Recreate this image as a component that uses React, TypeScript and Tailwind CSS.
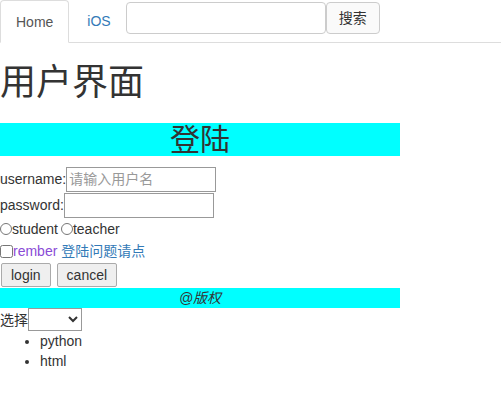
import React, { useState } from 'react';

const App = () => {
  const [keyword, setKeyword] = useState('');
  const [role, setRole] = useState('');

  return (
    <div className="min-h-screen bg-white text-[14px] leading-[20px] text-[#333] font-['Liberation_Sans','Noto_Sans_CJK_SC',sans-serif]">
      {/* Nav tabs + search */}
      <div className="flex items-start border-b border-[#ddd] h-[43px]">
        <a className="block h-[43px] px-[15px] pt-[11px] border border-[#ddd] border-b-white rounded-t-[4px] bg-white text-[#555]">
          Home
        </a>
        <a className="block h-[42px] pl-[18px] pr-[15px] pt-[11px] text-[#337ab7]">iOS</a>
        <form className="flex items-start mt-[2px]" onSubmit={(e) => e.preventDefault()}>
          <input
            value={keyword}
            onChange={(e) => setKeyword(e.target.value)}
            className="w-[200px] h-[32px] px-3 border border-[#ccc] rounded-[4px] outline-none"
          />
          <button
            type="submit"
            className="h-[32px] px-[12px] border border-[#ccc] rounded-[4px] bg-[#fafafa] text-[#333]"
          >
            搜索
          </button>
        </form>
      </div>

      {/* Title */}
      <h1 className="mt-[20px] mb-[10px] text-[36px] leading-[40px] font-normal">用户界面</h1>

      {/* Login title bar */}
      <h2 className="mt-[20px] mb-[10px] w-[400px] bg-[#00ffff] text-center text-[30px] leading-[33px] font-normal">
        登陆
      </h2>

      <form onSubmit={(e) => e.preventDefault()}>
        <div className="flex items-center h-[26px]">
          <span>username:</span>
          <input
            placeholder="请输入用户名"
            className="w-[150px] h-[25px] px-[2px] border border-[#999] text-[14px] placeholder:text-[#999] outline-none"
          />
        </div>
        <div className="flex items-center h-[26px]">
          <span>password:</span>
          <input type="password" className="w-[150px] h-[25px] px-[2px] border border-[#999] outline-none" />
        </div>
        <div className="flex items-center h-[22px]">
          <label className="flex items-center">
            <input type="radio" name="role" className="w-[12px] h-[12px] accent-[#555]" />
            <span>student</span>
          </label>
          <label className="flex items-center ml-[3px]">
            <input type="radio" name="role" className="w-[12px] h-[12px] accent-[#555]" />
            <span>teacher</span>
          </label>
        </div>
        <div className="flex items-center h-[22px]">
          <input type="checkbox" className="w-[13px] h-[13px] m-0 accent-[#555]" />
          <a className="text-[#8a4bd6]">rember</a>
          <a className="ml-[4px] text-[#337ab7]">登陆问题请点</a>
        </div>
        <div className="flex items-center h-[26px] pl-[1px] gap-[6px]">
          <button type="submit" className="h-[24px] px-[9px] border border-[#aaa] rounded-[2px] bg-[#efefef] text-[14px]">
            login
          </button>
          <button type="button" className="h-[24px] px-[9px] border border-[#aaa] rounded-[2px] bg-[#efefef] text-[14px]">
            cancel
          </button>
        </div>
      </form>

      {/* Footer bar */}
      <div className="w-[400px] bg-[#00ffff] text-center italic h-[20px]">@版权</div>

      <div className="flex items-center h-[23px]">
        <span>选择</span>
        <select
          value={role}
          onChange={(e) => setRole(e.target.value)}
          className="w-[54px] h-[23px] border border-[#999] bg-white"
        >
          <option value=""></option>
          <option value="a">A</option>
        </select>
      </div>

      <ul className="list-disc pl-[40px] mt-0 mb-[10px]">
        <li>python</li>
        <li>html</li>
      </ul>
    </div>
  );
};

export default App;
